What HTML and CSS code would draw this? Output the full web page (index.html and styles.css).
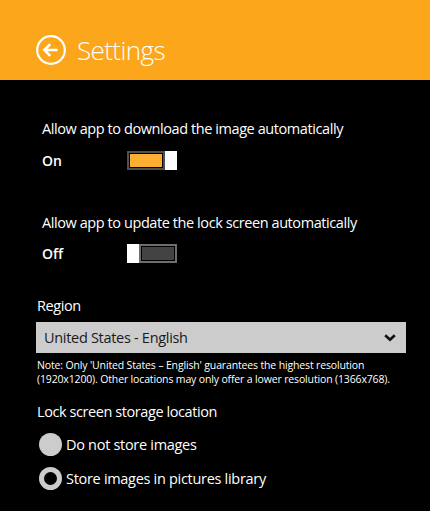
FILE: index.html
```html
<!DOCTYPE html>
<html lang="en">
<head>
<meta charset="utf-8">
<title>Settings</title>
<link rel="stylesheet" href="styles.css">
</head>
<body>
<header class="header">
  <svg class="back" width="30" height="30" viewBox="0 0 30 30" aria-hidden="true">
    <circle cx="15" cy="15" r="13.8" fill="none" stroke="#fff" stroke-width="2.2"/>
    <path d="M8.5 15 H21.5 M14.2 9.2 L8.4 15 L14.2 20.8" fill="none" stroke="#fff" stroke-width="2.6" stroke-linecap="butt" stroke-linejoin="miter"/>
  </svg>
  <h1 class="title">Settings</h1>
</header>
<main class="content">
  <section class="toggle-setting first">
    <div class="label">Allow app to download the image automatically</div>
    <div class="toggle-row">
      <span class="state">On</span>
      <span class="switch on"><span class="track"><span class="fill"></span></span><span class="thumb"></span></span>
    </div>
  </section>
  <section class="toggle-setting second">
    <div class="label">Allow app to update the lock screen automatically</div>
    <div class="toggle-row">
      <span class="state">Off</span>
      <span class="switch off"><span class="thumb"></span><span class="track"><span class="fill"></span></span></span>
    </div>
  </section>
  <section class="region">
    <div class="label">Region</div>
    <div class="select">
      <span>United States - English</span>
      <svg class="chevron" width="12" height="8" viewBox="0 0 12 8" aria-hidden="true">
        <path d="M1.2 1.2 L6 5.8 L10.8 1.2" fill="none" stroke="#111" stroke-width="2.6"/>
      </svg>
    </div>
    <p class="note">Note: Only 'United States – English' guarantees the highest resolution (1920x1200). Other locations may only offer a lower resolution (1366x768).</p>
  </section>
  <section class="storage">
    <div class="label">Lock screen storage location</div>
    <div class="radio-row first-radio">
      <span class="radio"></span>
      <span class="radio-text">Do not store images</span>
    </div>
    <div class="radio-row">
      <span class="radio checked"></span>
      <span class="radio-text">Store images in pictures library</span>
    </div>
  </section>
</main>
</body>
</html>
```
FILE: styles.css
```css
* { box-sizing: border-box; }
html, body {
  margin: 0;
  padding: 0;
  background: #000;
  color: #fff;
  font-family: "Open Sans", "Noto Sans", sans-serif;
}
.header {
  height: 80px;
  background: #fca71b;
  display: flex;
  align-items: center;
  padding-left: 36px;
  padding-top: 20px;
}
.back { display: block; }
.title {
  margin: 0 0 0 11px;
  font-size: 26px;
  font-weight: 300;
  line-height: 30px;
  letter-spacing: -0.6px;
}
.content {
  padding: 39px 0 0 37px;
}
.label {
  font-size: 14.5px;
  line-height: 20px;
  letter-spacing: -0.42px;
}
.toggle-setting { padding-left: 5px; }
.toggle-setting.second { margin-top: 43px; }
.toggle-setting.first .toggle-row { margin-top: 12px; }
.toggle-setting.second .toggle-row { margin-top: 11px; }
.toggle-row {
  display: flex;
  align-items: center;
  height: 19px;
}
.state {
  width: 85px;
  font-size: 14px;
  font-weight: 600;
}
.switch {
  display: flex;
  width: 50px;
  height: 19px;
}
.track {
  width: 38px;
  height: 19px;
  border: 2px solid #505050;
  padding: 1px;
  background: #000;
}
.fill { display: block; width: 100%; height: 100%; }
.switch.on .fill { background: #fcaf33; }
.switch.off .track { border-color: #6e6e6e; }
.switch.off .fill { background: #434343; }
.thumb {
  width: 12px;
  height: 19px;
  background: #fff;
}
.region { margin-top: 33px; }
.select {
  margin-top: 6px;
  margin-left: -1px;
  width: 370px;
  height: 31px;
  background: #cccccc;
  color: #1a1a1a;
  display: flex;
  align-items: center;
  justify-content: space-between;
  padding: 0 10px 0 8px;
  font-size: 14.5px;
  letter-spacing: -0.3px;
}
.chevron { display: block; }
.note {
  margin: 6px 0 0 0;
  width: 380px;
  font-size: 10.5px;
  line-height: 13.5px;
  letter-spacing: -0.15px;
}
.storage { margin-top: 16px; }
.radio-row {
  display: flex;
  align-items: center;
  height: 24px;
  margin-top: 10px;
}
.radio {
  width: 23px;
  height: 23px;
  border-radius: 50%;
  background: #cccccc;
  margin-left: 2px;
  margin-right: 4px;
}
.radio.checked {
  background: #000;
  border: 5px solid #cccccc;
}
.radio-text {
  font-size: 14.5px;
  letter-spacing: -0.3px;
}
```
